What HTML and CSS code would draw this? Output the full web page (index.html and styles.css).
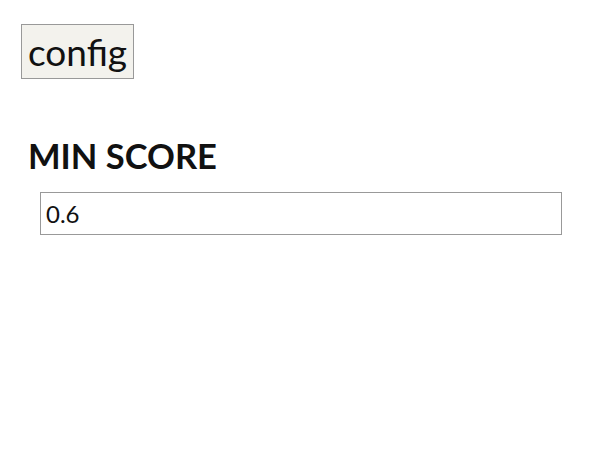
FILE: index.html
```html
<!DOCTYPE html>
<html>
<head>
<meta charset="utf-8">
<link rel="stylesheet" href="styles.css">
</head>
<body>
<div class="page">
  <button class="config-btn">config</button>
  <h2 class="label">MIN SCORE</h2>
  <div class="field"><input class="score-input" type="text" value="0.6"></div>
</div>
</body>
</html>
```
FILE: styles.css
```css
html, body {
  margin: 0;
  padding: 0;
  background: #fff;
}
.page {
  display: flex;
  flex-direction: column;
  align-items: flex-start;
  padding: 24px 0 0 21px;
  font-family: "Lato", "Open Sans", sans-serif;
  color: #111;
}
.config-btn {
  font-family: inherit;
  font-size: 37px;
  color: #111;
  background: #f3f2ed;
  border: 1px solid #999;
  padding: 0 6px;
  height: 55px;
  box-sizing: border-box;
  margin: 0;
}
.label {
  margin: 57px 0 0 7px;
  font-size: 34.5px;
  font-weight: 700;
  line-height: 40px;
}
.field {
  margin: 16px 0 0 19px;
}
.score-input {
  box-sizing: border-box;
  width: 522px;
  height: 43px;
  font-family: inherit;
  font-size: 24px;
  color: #111;
  border: 1px solid #999;
  padding: 0 5px;
  margin: 0;
  outline: none;
}
```
